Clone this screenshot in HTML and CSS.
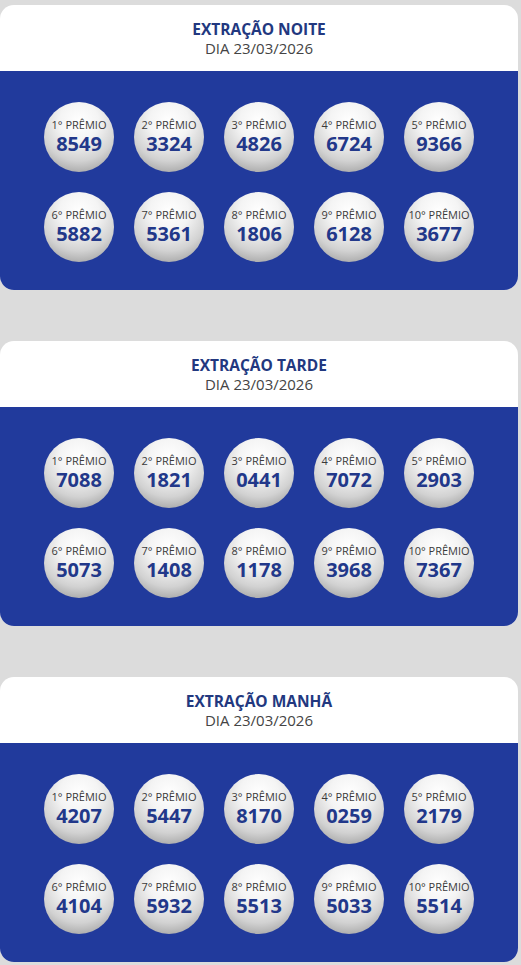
FILE: index.html
```html
<!DOCTYPE html>
<html lang="pt-BR">
<head>
    <meta charset="UTF-8">
    <meta name="viewport" content="width=device-width, initial-scale=1.0">
    <title>Resultados</title>
    <link rel="stylesheet" href="styles.css">
</head>
<body>
    <div class="card">
        <div class="card-head">
            <div class="title">EXTRAÇÃO NOITE</div>
            <div class="date">DIA 23/03/2026</div>
        </div>
        <div class="balls">
            <div class="ball"><span class="label">1° PRÊMIO</span><span class="num">8549</span></div>
            <div class="ball"><span class="label">2° PRÊMIO</span><span class="num">3324</span></div>
            <div class="ball"><span class="label">3° PRÊMIO</span><span class="num">4826</span></div>
            <div class="ball"><span class="label">4° PRÊMIO</span><span class="num">6724</span></div>
            <div class="ball"><span class="label">5° PRÊMIO</span><span class="num">9366</span></div>
            <div class="ball"><span class="label">6° PRÊMIO</span><span class="num">5882</span></div>
            <div class="ball"><span class="label">7° PRÊMIO</span><span class="num">5361</span></div>
            <div class="ball"><span class="label">8° PRÊMIO</span><span class="num">1806</span></div>
            <div class="ball"><span class="label">9° PRÊMIO</span><span class="num">6128</span></div>
            <div class="ball"><span class="label">10° PRÊMIO</span><span class="num">3677</span></div>
        </div>
    </div>

    <div class="card">
        <div class="card-head">
            <div class="title">EXTRAÇÃO TARDE</div>
            <div class="date">DIA 23/03/2026</div>
        </div>
        <div class="balls">
            <div class="ball"><span class="label">1° PRÊMIO</span><span class="num">7088</span></div>
            <div class="ball"><span class="label">2° PRÊMIO</span><span class="num">1821</span></div>
            <div class="ball"><span class="label">3° PRÊMIO</span><span class="num">0441</span></div>
            <div class="ball"><span class="label">4° PRÊMIO</span><span class="num">7072</span></div>
            <div class="ball"><span class="label">5° PRÊMIO</span><span class="num">2903</span></div>
            <div class="ball"><span class="label">6° PRÊMIO</span><span class="num">5073</span></div>
            <div class="ball"><span class="label">7° PRÊMIO</span><span class="num">1408</span></div>
            <div class="ball"><span class="label">8° PRÊMIO</span><span class="num">1178</span></div>
            <div class="ball"><span class="label">9° PRÊMIO</span><span class="num">3968</span></div>
            <div class="ball"><span class="label">10° PRÊMIO</span><span class="num">7367</span></div>
        </div>
    </div>

    <div class="card">
        <div class="card-head">
            <div class="title">EXTRAÇÃO MANHÃ</div>
            <div class="date">DIA 23/03/2026</div>
        </div>
        <div class="balls">
            <div class="ball"><span class="label">1° PRÊMIO</span><span class="num">4207</span></div>
            <div class="ball"><span class="label">2° PRÊMIO</span><span class="num">5447</span></div>
            <div class="ball"><span class="label">3° PRÊMIO</span><span class="num">8170</span></div>
            <div class="ball"><span class="label">4° PRÊMIO</span><span class="num">0259</span></div>
            <div class="ball"><span class="label">5° PRÊMIO</span><span class="num">2179</span></div>
            <div class="ball"><span class="label">6° PRÊMIO</span><span class="num">4104</span></div>
            <div class="ball"><span class="label">7° PRÊMIO</span><span class="num">5932</span></div>
            <div class="ball"><span class="label">8° PRÊMIO</span><span class="num">5513</span></div>
            <div class="ball"><span class="label">9° PRÊMIO</span><span class="num">5033</span></div>
            <div class="ball"><span class="label">10° PRÊMIO</span><span class="num">5514</span></div>
        </div>
    </div>
</body>
</html>
```

FILE: styles.css
```css
body { margin: 0; padding-top: 5px; background: #dcdcdc; font-family: "Open Sans", "Noto Sans", sans-serif; }
.card { width: 518px; margin-bottom: 51px; border-radius: 14px; overflow: hidden; background: #fff; }
.card-head { height: 66px; box-sizing: border-box; padding-top: 14px; text-align: center; }
.title { font-size: 15.5px; font-weight: 700; color: #22387f; line-height: 20px; }
.date { font-size: 15px; color: #444; line-height: 19px; }
.balls { background: #213a9c; padding: 31px 44px 28px; display: grid; grid-template-columns: repeat(5, 70px); gap: 20px; }
.ball { width: 70px; height: 70px; box-sizing: border-box; padding-bottom: 3px; border-radius: 50%; display: flex; flex-direction: column; align-items: center; justify-content: center;
    background: radial-gradient(circle at 50% 28%, #fff 0%, #f4f4f4 32%, #d2d2d2 64%, #8c8c8c 100%); }
.label { font-size: 11px; color: #3a3a3a; line-height: 14px; margin-bottom: 1px; white-space: nowrap; }
.num { font-size: 20px; font-weight: 700; color: #22388a; line-height: 21px; }
```
